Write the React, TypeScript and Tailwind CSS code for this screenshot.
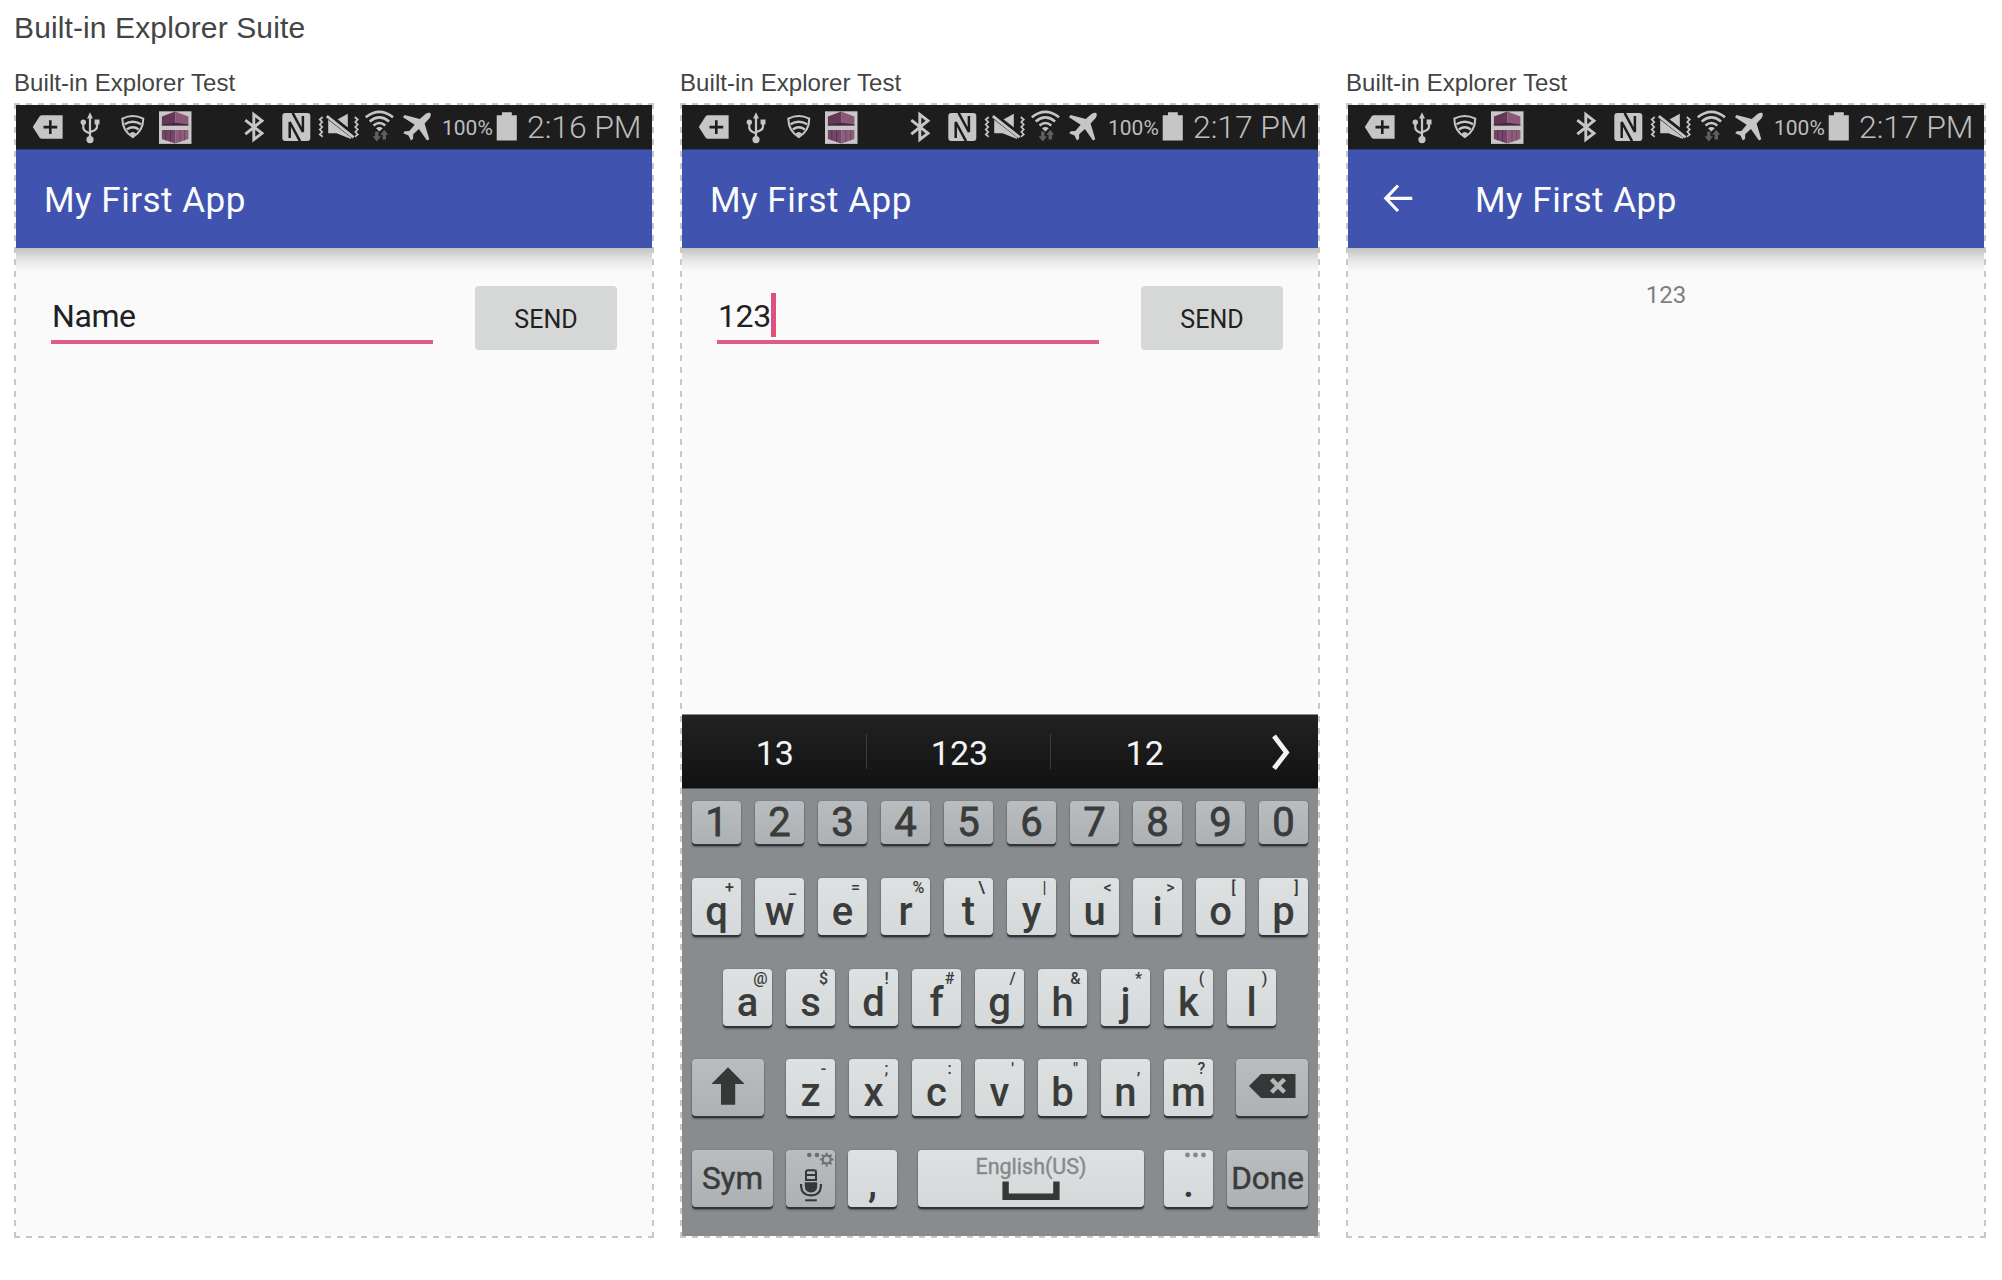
import React from "react";

const INK = "#c6c6c6";

function TagIcon() {
  return (
    <svg className="ml-[15px] h-11 w-[34px] shrink-0" viewBox="31 105 34 44">
      <path d="M32.8 127 39.5 116.6Q40.4 115.3 42 115.3H62.6V138.8H42Q40.4 138.8 39.5 137.5Z" fill={INK} />
      <path d="M50.3 120.3V134M43.5 127.1H57.2" stroke="#1d1d1d" strokeWidth="2.6" />
    </svg>
  );
}

function UsbIcon() {
  return (
    <svg className="ml-[14px] h-11 w-[22px] shrink-0" viewBox="79 105 22 44" fill="none" stroke={INK}>
      <path d="M90 117V138M83.3 124V127.5Q83.3 130 86 131.5L90 133.6M97 123V126.6Q97 129 94.5 130.3L90 132.3" strokeWidth="2.2" />
      <path d="M90 112.3 93 118.5H87Z" fill={INK} stroke="none" />
      <circle cx="83.3" cy="122.3" r="2.7" fill={INK} stroke="none" />
      <rect x="94.6" y="119.5" width="4.9" height="5" fill={INK} stroke="none" />
      <circle cx="90" cy="139.6" r="3.6" fill={INK} stroke="none" />
    </svg>
  );
}

function WifiShieldIcon() {
  return (
    <svg className="ml-[18px] h-11 w-[27px] shrink-0" viewBox="119 105 27 44" fill="none" stroke={INK}>
      <path d="M122.3 118.6Q132.8 113.6 143.3 118.6C143.3 127 139.5 133.2 132.8 137.2C126.1 133.2 122.3 127 122.3 118.6Z" strokeWidth="2" />
      <path d="M124.5 124.3Q132.8 119.2 141.1 124.3M126.8 129.4Q132.8 125.2 138.8 129.4" strokeWidth="2.4" />
      <path d="M129.6 133.6Q132.8 130.6 136 133.6L132.8 136.4Z" fill={INK} stroke="none" />
    </svg>
  );
}

function CubeIcon() {
  return (
    <svg className="ml-3 h-11 w-[35px] shrink-0" viewBox="158 105 35 44">
      <rect x="159" y="111.3" width="32.5" height="32.6" fill="#c9c7c8" />
      <path d="M175.2 111.5 161.9 116.5V125.5H175.2Z" fill="#623856" />
      <path d="M175.2 111.5 188.4 116.5V125.5H175.2Z" fill="#8a5876" />
      <path d="M161.9 124.6 175.2 122.8 188.4 124.6V125.6H161.9Z" fill="#432540" />
      <path d="M161.9 130H175.2V143.6L161.9 139Z" fill="#764668" />
      <path d="M175.2 130H188.4V139L175.2 143.6Z" fill="#8f5d7c" />
      <path d="M165.8 130V140.3M170.5 130V141.8" stroke="#553050" strokeWidth="0.9" />
      <path d="M180 130V142M184.5 130V140.3" stroke="#714564" strokeWidth="0.9" />
    </svg>
  );
}

function BluetoothIcon() {
  return (
    <svg className="ml-[50px] h-11 w-[22px] shrink-0" viewBox="243 105 22 44" fill="none" stroke={INK}>
      <path d="M245.3 120.2 262 133.3 253.8 139.5V114.5L262 120.7 245.3 134.2" strokeWidth="2.9" />
    </svg>
  );
}

function NfcIcon() {
  return (
    <svg className="ml-4 h-11 w-[31px] shrink-0" viewBox="281 105 31 44">
      <rect x="282.3" y="113.1" width="28" height="27.8" rx="3" fill={INK} />
      <path d="M292.6 112.8 302.9 132V116M300 141.2 289.7 122V138" fill="none" stroke="#1d1d1d" strokeWidth="2.5" />
    </svg>
  );
}

function MuteIcon() {
  return (
    <svg className="ml-[5px] h-11 w-[43px] shrink-0" viewBox="317 105 43 44" fill="none" stroke={INK}>
      <path d="M322.7 117 319.8 119.5 322.2 122 319.8 124.5 322.2 127 319.8 129.5 322.2 132 319.8 134.5 322.7 136.8" strokeWidth="1.8" />
      <path d="M354.8 117 357.7 119.5 355.3 122 357.7 124.5 355.3 127 357.7 129.5 355.3 132 357.7 134.5 354.8 136.8" strokeWidth="1.8" />
      <path d="M335.5 120.5 347.8 113.8V130Z" fill={INK} stroke="none" />
      <path d="M328.2 119.8 351 137.5V139L336.5 133.2H328.2Z" fill={INK} stroke="none" />
      <path d="M327.8 115.2 354.5 136.2" stroke="#1d1d1d" strokeWidth="5.6" />
      <path d="M326.8 116.2 353.6 137.4" strokeWidth="2.8" />
    </svg>
  );
}

function WifiIcon() {
  return (
    <svg className="ml-1 h-11 w-[31px] shrink-0" viewBox="364 105 31 44" fill="none" stroke={INK}>
      <path d="M365.8 117.3Q379.4 106.5 393 117.3M369.7 121.5Q379.4 113.4 389.1 121.5M373.5 125.4Q379.4 120.6 385.3 125.4" strokeWidth="2.6" />
      <path d="M376 128.2Q379.4 125.6 382.8 128.2L379.4 131.6Z" fill={INK} stroke="none" />
      <path d="M375.1 131.5H378.5V136.2H381L376.8 141.6 372.6 136.2H375.1Z" fill="#5f5f5f" stroke="none" />
      <path d="M382.5 139.5H386V134.8H388.2L384.2 129.8 380.2 134.8H382.5Z" fill="#5f5f5f" stroke="none" />
    </svg>
  );
}

function PlaneIcon() {
  return (
    <svg className="ml-[7px] h-11 w-[30px] shrink-0" viewBox="402 105 30 44">
      <path
        d="M430.5 113.2C431.3 115 430.3 117.3 428.8 118.9L424.6 123.6 429.3 139.2 427 140.6 418.9 128.9 413.2 134.3 413.1 138.8 410.9 140.5 408.5 135.4 403.2 133.2 404.8 131.3 409.3 131 414.7 124.7 403 117.3 404.5 115 419.8 119 424.6 114.8C426.3 113.3 428.8 112.3 430.5 113.2Z"
        fill={INK}
      />
    </svg>
  );
}

function StatusBar({ time }: { time: string }) {
  return (
    <div className="flex h-11 items-start bg-[#1d1d1d] text-[#bdbdbd]">
      <TagIcon />
      <UsbIcon />
      <WifiShieldIcon />
      <CubeIcon />
      <BluetoothIcon />
      <NfcIcon />
      <MuteIcon />
      <WifiIcon />
      <PlaneIcon />
      <span className="ml-[10px] w-[53px] shrink-0 text-[21px] leading-[47px]">100%</span>
      <svg className="h-11 w-6 shrink-0" viewBox="495 105 24 44">
        <path d="M496.7 115.3H502V112.2H511.8V115.3H516.8V140.4H496.7Z" fill={INK} />
      </svg>
      <span className="ml-2 shrink-0 whitespace-nowrap text-[32px] font-light leading-[45px] tracking-[-0.1px]">{time}</span>
    </div>
  );
}

function AppBar({ back = false }: { back?: boolean }) {
  return (
    <header className="relative z-10 flex h-[99px] items-start border-t border-[#2c3a7c] bg-[#3f53af] text-[#fbfbfd]">
      {back && (
        <svg className="ml-[34px] mt-[32px] h-8 w-8" viewBox="0 0 32 32" fill="none" stroke="currentColor" strokeWidth="3.2">
          <path d="M30.3 16.3H4M16 3.5 3.8 16.3 16 29" />
        </svg>
      )}
      <h2 className={`text-[35px] leading-[102px] tracking-[0.5px] ${back ? "ml-[61px]" : "ml-[28px]"}`}>My First App</h2>
      <div className="absolute inset-x-0 top-full h-6 bg-gradient-to-b from-[#c3c3c1] via-[#e6e6e5] to-[#fafafa]" />
    </header>
  );
}

function NameForm({ value, focused = false }: { value: string; focused?: boolean }) {
  return (
    <div className="flex items-start pl-[35px] pt-[38px]">
      <div className="mt-[3px] flex h-[55px] w-[382px] items-start border-b-[4px] border-[#dc5b87] text-[#212121]">
        <span className="pl-px text-[32px] leading-[55px] tracking-[-0.4px]">{value}</span>
        {focused && <span className="mt-[4px] h-[44px] w-[5px] bg-[#e0507f]" />}
      </div>
      <button className="ml-[42px] h-16 w-[142px] rounded-[4px] bg-[#d6d8d7] text-[25px] leading-[66px] text-[#212121]">
        <span className="block pt-px">SEND</span>
      </button>
    </div>
  );
}

type KeyProps = {
  label?: string;
  sub?: string;
  kind?: "letter" | "number" | "word" | "plain";
  dark?: boolean;
  width?: string;
  children?: React.ReactNode;
};

function Key({ label, sub, kind = "letter", dark = false, width = "w-[49px]", children }: KeyProps) {
  const size = {
    letter: "h-[57px] text-[40px] leading-[68px] font-medium",
    number: "h-[43px] text-[40px] leading-[44px] [-webkit-text-stroke:0.8px_#3a3b3b]",
    word: "h-[57px] text-[31.5px] leading-[57px] [-webkit-text-stroke:0.5px_#3a3b3b]",
    plain: "h-[57px]",
  }[kind];
  const tone = dark ? "bg-gradient-to-b from-[#b9bdbf] to-[#adb1b3]" : "bg-gradient-to-b from-[#dee1e2] to-[#d5d9da]";
  return (
    <div className={`relative shrink-0 rounded-[4px] text-center text-[#3a3b3b] shadow-[0_2px_0_#303436,0_3px_2px_#55595c,0_0_2px_#6b6f72] ${size} ${tone} ${width}`}>
      {label}
      {sub && <span className="absolute right-0 top-0 w-[23px] text-center text-[16px] font-medium leading-5">{sub}</span>}
      {children}
    </div>
  );
}

const topRow: [string, string][] = [["q", "+"], ["w", "_"], ["e", "="], ["r", "%"], ["t", "\\"], ["y", "|"], ["u", "<"], ["i", ">"], ["o", "["], ["p", "]"]];
const homeRow: [string, string][] = [["a", "@"], ["s", "$"], ["d", "!"], ["f", "#"], ["g", "/"], ["h", "&"], ["j", "*"], ["k", "("], ["l", ")"]];
const bottomRow: [string, string][] = [["z", "-"], ["x", ";"], ["c", ":"], ["v", "'"], ["b", "\""], ["n", ","], ["m", "?"]];

function Keyboard() {
  return (
    <div className="flex h-[522px] flex-col border-t border-[#85888a] bg-[#888c8f]">
      <div className="flex h-[74px] items-start border-b border-[#4b4d4e] bg-gradient-to-b from-[#222222] to-[#121212] text-[34px] leading-[77px] text-[#f4f4f4]">
        {["13", "123", "12"].map((word, i) => (
          <div key={word} className="flex w-[184.7px] items-start">
            <span className="flex-1 pl-[2px] text-center">{word}</span>
            {i < 2 && <span className="mt-[19px] h-[35px] w-px bg-[#3c3c3c]" />}
          </div>
        ))}
        <svg className="ml-[33px] mt-[16px] h-10 w-6" viewBox="0 0 24 40" fill="none" stroke="currentColor" strokeWidth="4.8">
          <path d="M5 5 17.5 21.5 5 37.5" />
        </svg>
      </div>
      <div className="flex flex-col px-[10px] pt-[12px]">
        <div className="flex gap-[14px]">
          {"1234567890".split("").map((n) => <Key key={n} label={n} kind="number" dark />)}
        </div>
        <div className="mt-[34px] flex gap-[14px]">
          {topRow.map(([l, s]) => <Key key={l} label={l} sub={s} />)}
        </div>
        <div className="mt-[33.5px] flex gap-[14px] pl-[31px]">
          {homeRow.map(([l, s]) => <Key key={l} label={l} sub={s} />)}
        </div>
        <div className="mt-[33.5px] flex">
          <Key kind="plain" dark width="w-[72px]">
            <svg className="h-full w-full" viewBox="0 0 72 57">
              <path d="M36 8.3 52.6 25H43.2V45.8H29V25H19.4Z" fill="#363737" />
            </svg>
          </Key>
          <div className="ml-[22px] flex gap-[14px]">
            {bottomRow.map(([l, s]) => <Key key={l} label={l} sub={s} />)}
          </div>
          <div className="ml-[23px]">
            <Key kind="plain" dark width="w-[72px]">
              <svg className="h-full w-full" viewBox="0 0 72 57">
                <path d="M13 27 25 15H59.5V39H25Z" fill="#363737" />
                <path d="M35.5 20.3 48.5 33.3M48.5 20.3 35.5 33.3" stroke="#b3b7b9" strokeWidth="4.4" />
              </svg>
            </Key>
          </div>
        </div>
        <div className="mt-[34px] flex">
          <Key label="Sym" kind="word" dark width="w-[81px]" />
          <div className="ml-[13px] flex gap-[13px]">
            <Key kind="plain" dark>
              <svg className="h-full w-full" viewBox="0 0 49 57">
                <circle cx="23.3" cy="5" r="2.3" fill="#6b6d6e" />
                <circle cx="31" cy="5" r="2.3" fill="#6b6d6e" />
                <g stroke="#6b6d6e" fill="none">
                  <circle cx="40.7" cy="9.6" r="4" strokeWidth="2" />
                  <path d="M40.7 2.8V5M40.7 14.2V16.4M33.9 9.6H36.1M45.3 9.6H47.5M35.9 4.8 37.5 6.4M43.9 12.8 45.5 14.4M35.9 14.4 37.5 12.8M43.9 6.4 45.5 4.8" strokeWidth="2" />
                </g>
                <g fill="none" stroke="#363737">
                  <path d="M20 30V22Q20 20.2 22 20.2H28Q30 20.2 30 22V30Z" strokeWidth="2" />
                  <path d="M20 25H30" strokeWidth="2" />
                  <path d="M18.8 32.3H31.2V36Q31.2 42.4 25 42.4T18.8 36Z" fill="#363737" stroke="none" />
                  <path d="M15.1 34V36.5Q15.7 45.4 25 45.4T34.9 36.5V34" strokeWidth="2.2" />
                  <path d="M19.2 50.3H30.8" strokeWidth="2" />
                </g>
              </svg>
            </Key>
            <Key label="," />
          </div>
          <div className="ml-[21px]">
            <Key kind="plain" width="w-[226px]">
              <span className="block text-[21.5px] leading-[33px] text-[#86898b] [-webkit-text-stroke:0.4px_#86898b]">English(US)</span>
              <svg className="mx-auto -mt-[2px] h-5 w-[58px]" viewBox="0 0 58 20" fill="none" stroke="#363737" strokeWidth="6.4">
                <path d="M3.6 0.5V15.7H54.4V0.5" />
              </svg>
            </Key>
          </div>
          <div className="ml-5">
            <Key label=".">
              <svg className="absolute right-[6px] top-[2px] h-1.5 w-[23px]" viewBox="0 0 23 6" fill="#85888a">
                <circle cx="3.5" cy="3" r="2.4" />
                <circle cx="11.5" cy="3" r="2.4" />
                <circle cx="19.5" cy="3" r="2.4" />
              </svg>
            </Key>
          </div>
          <div className="ml-[14px]">
            <Key label="Done" kind="word" dark width="w-[81px]" />
          </div>
        </div>
      </div>
    </div>
  );
}

function Shot({ children }: { children: React.ReactNode }) {
  return (
    <section className="w-[640px] shrink-0">
      <h3 className="h-[34px] font-['Liberation_Sans',sans-serif] text-[24px] leading-[28px] tracking-[0.07px] text-[#444444]">Built-in Explorer Test</h3>
      <div className="h-[1135px] p-[2px] [background-image:repeating-linear-gradient(90deg,#c8c8c8_0_6px,transparent_6px_11.96px),repeating-linear-gradient(90deg,#c8c8c8_0_6px,transparent_6px_11.96px),repeating-linear-gradient(180deg,#c8c8c8_0_6px,transparent_6px_12.01px),repeating-linear-gradient(180deg,#c8c8c8_0_6px,transparent_6px_12.01px)] [background-position:0_0,0_100%,0_0,100%_0] [background-repeat:no-repeat] [background-size:100%_2px,100%_2px,2px_100%,2px_100%]">
        <div className="flex h-full flex-col overflow-hidden bg-[#fafafa] font-[Roboto,sans-serif]">{children}</div>
      </div>
    </section>
  );
}

export default function App() {
  return (
    <main className="h-[1280px] w-[2002px] overflow-hidden bg-white pl-[14px] pt-[10px]">
      <h1 className="h-[59px] font-['Liberation_Sans',sans-serif] text-[30px] leading-[36px] tracking-[0.12px] text-[#444444]">Built-in Explorer Suite</h1>
      <div className="flex gap-[26px]">
        <Shot>
          <StatusBar time="2:16 PM" />
          <AppBar />
          <NameForm value="Name" />
        </Shot>
        <Shot>
          <StatusBar time="2:17 PM" />
          <AppBar />
          <NameForm value="123" focused />
          <div className="mt-auto">
            <Keyboard />
          </div>
        </Shot>
        <Shot>
          <StatusBar time="2:17 PM" />
          <AppBar back />
          <p className="pt-[30px] text-center text-[24px] leading-[34px] text-[#7f7f7f]">123</p>
        </Shot>
      </div>
    </main>
  );
}
